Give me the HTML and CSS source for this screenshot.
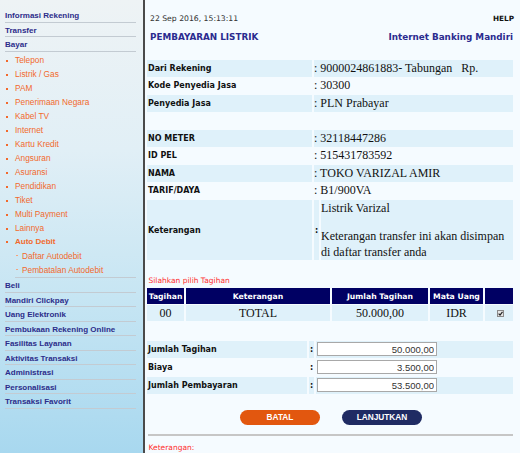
FILE: index.html
```html
<!DOCTYPE html>
<html lang="id">
<head>
    <meta charset="UTF-8">
    <meta name="viewport" content="width=device-width, initial-scale=1.0">
    <title>Pembayaran Listrik - Internet Banking Mandiri</title>
    <link rel="stylesheet" href="styles.css">
</head>
<body>

<div class="page">
    <nav class="sidebar">
        <a href="#" class="menu">Informasi Rekening</a>
        <a href="#" class="menu">Transfer</a>
        <a href="#" class="menu">Bayar</a>
        <ul class="submenu">
            <li>Telepon</li>
            <li>Listrik / Gas</li>
            <li>PAM</li>
            <li>Penerimaan Negara</li>
            <li>Kabel TV</li>
            <li>Internet</li>
            <li>Kartu Kredit</li>
            <li>Angsuran</li>
            <li>Asuransi</li>
            <li>Pendidikan</li>
            <li>Tiket</li>
            <li>Multi Payment</li>
            <li>Lainnya</li>
            <li class="current">Auto Debit</li>
            <li class="sub2">Daftar Autodebit</li>
            <li class="sub2">Pembatalan Autodebit</li>
        </ul>
        <a href="#" class="menu">Beli</a>
        <a href="#" class="menu">Mandiri Clickpay</a>
        <a href="#" class="menu">Uang Elektronik</a>
        <a href="#" class="menu">Pembukaan Rekening Online</a>
        <a href="#" class="menu">Fasilitas Layanan</a>
        <a href="#" class="menu">Aktivitas Transaksi</a>
        <a href="#" class="menu">Administrasi</a>
        <a href="#" class="menu">Personalisasi</a>
        <a href="#" class="menu">Transaksi Favorit</a>
    </nav>

    <main class="content">
        <div class="topbar">
            <span class="date">22 Sep 2016, 15:13:11</span>
            <span class="help">HELP</span>
        </div>
        <div class="titlebar">
            <span class="title">PEMBAYARAN LISTRIK</span>
            <span class="title">Internet Banking Mandiri</span>
        </div>

        <table class="form detail">
            <colgroup>
                <col class="col-label">
                <col class="col-colon">
                <col>
            </colgroup>
            <tr class="band">
                <td class="label">Dari Rekening</td>
                <td class="value" colspan="2">: 9000024861883- Tabungan&nbsp;&nbsp; Rp.</td>
            </tr>
            <tr>
                <td class="label">Kode Penyedia Jasa</td>
                <td class="value" colspan="2">: 30300</td>
            </tr>
            <tr class="band">
                <td class="label">Penyedia Jasa</td>
                <td class="value" colspan="2">: PLN Prabayar</td>
            </tr>
            <tr>
                <td colspan="3"></td>
            </tr>
            <tr class="band">
                <td class="label">NO METER</td>
                <td class="value" colspan="2">: 32118447286</td>
            </tr>
            <tr>
                <td class="label">ID PEL</td>
                <td class="value" colspan="2">: 515431783592</td>
            </tr>
            <tr class="band">
                <td class="label">NAMA</td>
                <td class="value" colspan="2">: TOKO VARIZAL AMIR</td>
            </tr>
            <tr>
                <td class="label">TARIF/DAYA</td>
                <td class="value" colspan="2">: B1/900VA</td>
            </tr>
            <tr class="band">
                <td class="label">Keterangan</td>
                <td class="colon">:</td>
                <td class="value">
                    <div class="line">Listrik Varizal</div>
                    <div class="line hint">Keterangan transfer ini akan disimpan<br>di daftar transfer anda</div>
                </td>
            </tr>
        </table>

        <p class="notice">Silahkan pilih Tagihan</p>

        <table class="bills">
            <colgroup>
                <col class="col-no">
                <col class="col-desc">
                <col class="col-amount">
                <col class="col-cur">
                <col>
            </colgroup>
            <tr>
                <th>Tagihan</th>
                <th>Keterangan</th>
                <th>Jumlah Tagihan</th>
                <th>Mata Uang</th>
                <th></th>
            </tr>
            <tr class="band">
                <td>00</td>
                <td>TOTAL</td>
                <td>50.000,00</td>
                <td>IDR</td>
                <td>
                    <span class="check">
                        <svg width="5" height="5" viewBox="0 0 5 5"><path d="M0.6 2.6 L2 4 L4.5 0.8" fill="none" stroke="#222" stroke-width="1.2"/></svg>
                    </span>
                </td>
            </tr>
        </table>

        <table class="form totals">
            <colgroup>
                <col class="col-label">
                <col class="col-colon">
                <col>
            </colgroup>
            <tr class="band">
                <td class="label">Jumlah Tagihan</td>
                <td class="colon">:</td>
                <td><input class="amount" type="text" value="50.000,00" readonly></td>
            </tr>
            <tr>
                <td class="label">Biaya</td>
                <td class="colon">:</td>
                <td><input class="amount" type="text" value="3.500,00" readonly></td>
            </tr>
            <tr class="band">
                <td class="label">Jumlah Pembayaran</td>
                <td class="colon">:</td>
                <td><input class="amount" type="text" value="53.500,00" readonly></td>
            </tr>
        </table>

        <div class="actions">
            <button class="btn btn-cancel">BATAL</button>
            <button class="btn btn-next">LANJUTKAN</button>
        </div>

        <hr class="divider">
        <p class="notice">Keterangan:</p>
    </main>
</div>

</body>
</html>
```

FILE: styles.css
```css
body {
    margin: 0;
    font-family: "DejaVu Sans", Verdana, sans-serif;
}
.page {
    display: flex;
    min-height: 453px;
}

/* left menu */
.sidebar {
    width: 145px;
    flex-shrink: 0;
    box-sizing: border-box;
    padding: 8px 7px 0 5px;
    border-right: 2px solid #4a4a4a;
    background: linear-gradient(#eef3f5, #e1eff6 33%, #c6e5f3 66%, #a8d8ef);
    font-family: "Liberation Sans", Arial, sans-serif;
}
.menu {
    display: block;
    padding-top: 2px;
    line-height: 11.5px;
    font-size: 8px;
    font-weight: bold;
    color: #2c2c8a;
    text-decoration: none;
    border-bottom: 1px solid #c3cbd2;
}
.submenu {
    list-style: none;
    margin: 0 0 0 10px;
    padding: 1.5px 0 0;
    border-bottom: 1px solid #c3cbd2;
}
.submenu li {
    line-height: 14px;
    font-size: 8.3px;
    color: #f2692c;
}
.submenu li::before {
    content: "";
    display: inline-block;
    width: 2px;
    height: 2px;
    margin: 0 7px 0 -9px;
    vertical-align: middle;
    background: #f2692c;
}
.submenu li.current {
    font-weight: bold;
    font-size: 8px;
}
.submenu li.sub2 {
    padding-left: 7px;
}
.submenu li.sub2::before {
    height: 1px;
    margin: 0 4px 0 -6px;
    vertical-align: 3px;
    background: #f7a27a;
}

/* main area */
.content {
    flex: 1;
    padding: 13px 3px 0 0;
    background: #f5fbff;
}
.topbar,
.titlebar {
    display: flex;
    justify-content: space-between;
    align-items: center;
    padding: 0 3px 0 5px;
}
.topbar {
    height: 11px;
}
.titlebar {
    height: 12px;
    margin-top: 7px;
    padding-right: 4px;
}
.date {
    font-size: 7.7px;
    color: #333;
}
.help {
    font-size: 7.3px;
    font-weight: bold;
    color: #111;
}
.title {
    font-size: 8.8px;
    font-weight: bold;
    color: #2b2b8f;
}

table {
    width: 370px;
    table-layout: fixed;
    border-spacing: 2px 1px;
}
td, th {
    padding: 0;
}
.band td {
    background: #dff1fa;
}
.form {
    margin-top: 16px;
}
.form .col-label {
    width: 165px;
}
.form .col-colon {
    width: 5px;
}
.form td {
    height: 16.5px;
}
.label {
    padding-left: 1px;
    font-size: 8px;
    font-weight: bold;
    color: #111;
}
.value {
    font-family: "Liberation Serif", "Times New Roman", serif;
    font-size: 12px;
    color: #111;
    white-space: nowrap;
}
.colon {
    font-size: 8px;
    font-weight: bold;
    color: #111;
    text-align: center;
}
.detail .line {
    line-height: 16px;
}
.detail .hint {
    margin-top: 12px;
}

.notice {
    margin: 15px 0 0 3.5px;
    line-height: 10px;
    font-size: 7.5px;
    color: #ff2d2d;
}

.bills {
    margin-top: 1px;
}
.bills .col-no {
    width: 37px;
}
.bills .col-desc {
    width: 144px;
}
.bills .col-amount {
    width: 96px;
}
.bills .col-cur {
    width: 53px;
}
.bills th {
    height: 16px;
    background: #000063;
    color: #fff;
    font-size: 7.7px;
    font-weight: bold;
    white-space: nowrap;
}
.bills td {
    height: 16px;
    text-align: center;
    font-family: "Liberation Serif", "Times New Roman", serif;
    font-size: 12px;
    color: #111;
}
.check {
    display: inline-flex;
    align-items: center;
    justify-content: center;
    width: 5px;
    height: 5px;
    margin-left: 3px;
    border: 1px solid #8a8a8a;
    background: #e6e6e6;
    vertical-align: middle;
}

.form.totals {
    margin-top: 17.5px;
}
.totals .col-label {
    width: 160px;
}
.totals td {
    height: 17px;
}
.amount {
    display: block;
    box-sizing: border-box;
    width: 120px;
    height: 14px;
    margin-left: 1px;
    padding: 0 2px;
    border: 1px solid #a8a8a8;
    background: #fff;
    text-align: right;
    font-family: "Liberation Sans", Arial, sans-serif;
    font-size: 9.5px;
    color: #333;
}

.actions {
    display: flex;
    justify-content: center;
    gap: 22px;
    margin-top: 15px;
}
.btn {
    width: 80px;
    height: 15px;
    padding: 0;
    border: 0;
    border-radius: 8px;
    color: #fff;
    font-family: "Liberation Sans", Arial, sans-serif;
    font-size: 8.3px;
    font-weight: bold;
}
.btn-cancel {
    background: #e2570f;
}
.btn-next {
    background: #1f2b63;
}

.divider {
    height: 2px;
    margin: 9px 4px 0 3px;
    border: 0;
    background: #c6c6c6;
}
.divider + .notice {
    margin-top: 7px;
}
```
